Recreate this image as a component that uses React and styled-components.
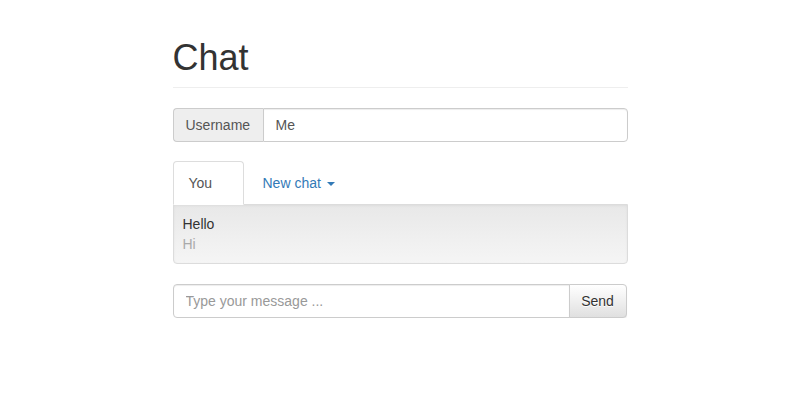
import React from 'react'
import styled, { createGlobalStyle } from 'styled-components'

const GlobalStyle = createGlobalStyle`
  body {
    margin: 0;
    background: #fff;
    font-family: "Liberation Sans", Arial, sans-serif;
    font-size: 14px;
    line-height: 20px;
    color: #333;
  }
  * { box-sizing: border-box; }
`

const Container = styled.div`
  width: 455px;
  margin: 0 auto;
`

const PageHeader = styled.div`
  margin: 38px 0 20px;
  padding-bottom: 9px;
  border-bottom: 1px solid #eee;
`

const Title = styled.h1`
  margin: 0;
  font-size: 36px;
  line-height: 39.6px;
  font-weight: 500;
  color: #333;
`

const InputGroup = styled.div`
  display: flex;
  height: 34px;
  margin-top: ${p => p.$top || 0}px;
`

const Addon = styled.span`
  display: flex;
  align-items: center;
  width: 90px;
  padding: 6px 12px;
  background: #eee;
  border: 1px solid #ccc;
  border-right: 0;
  border-radius: 4px 0 0 4px;
  color: #555;
`

const Input = styled.input`
  flex: 1;
  min-width: 0;
  height: 34px;
  padding: 6px 12px;
  font: inherit;
  color: #555;
  border: 1px solid #ccc;
  border-radius: ${p => (p.$side === 'left' ? '4px 0 0 4px' : '0 4px 4px 0')};
  box-shadow: inset 0 1px 1px rgba(0, 0, 0, 0.075);
  outline: none;
  &::placeholder { color: #999; }
`

const SendButton = styled.button`
  width: 58px;
  height: 34px;
  padding: 6px 0;
  margin-left: -1px;
  margin-right: 1px;
  font: inherit;
  color: #333;
  text-shadow: 0 1px 0 #fff;
  background-image: linear-gradient(to bottom, #fff 0, #e0e0e0 100%);
  border: 1px solid #ccc;
  border-radius: 0 4px 4px 0;
  box-shadow: inset 0 1px 0 rgba(255, 255, 255, 0.15), 0 1px 1px rgba(0, 0, 0, 0.075);
`

const Tabs = styled.ul`
  display: flex;
  list-style: none;
  margin: 19px 0 0;
  padding: 0;
`

const Tab = styled.li`
  margin-right: 2px;
  margin-bottom: -1px;
  padding: 11px 15px 11px ${p => (p.$active ? 15 : 16)}px;
  width: ${p => (p.$active ? '71px' : 'auto')};
  border: 1px solid ${p => (p.$active ? '#ddd' : 'transparent')};
  border-bottom-color: transparent;
  border-radius: 4px 4px 0 0;
  background: ${p => (p.$active ? '#fff' : 'transparent')};
  color: ${p => (p.$active ? '#555' : '#337ab7')};
  position: relative;
  z-index: ${p => (p.$active ? 1 : 0)};
`

const Caret = styled.span`
  display: inline-block;
  width: 0;
  height: 0;
  margin-left: 6px;
  vertical-align: middle;
  border-top: 4px solid;
  border-right: 4px solid transparent;
  border-left: 4px solid transparent;
`

const Well = styled.div`
  padding: 9px;
  background-image: linear-gradient(to bottom, #e8e8e8 0, #f5f5f5 100%);
  border: 1px solid #dcdcdc;
  border-radius: 0 0 4px 4px;
  box-shadow: inset 0 1px 3px rgba(0, 0, 0, 0.05), 0 1px 0 rgba(255, 255, 255, 0.1);
`

const Message = styled.div`
  color: ${p => (p.$muted ? '#aaa' : '#333')};
`

export default function App() {
  return (
    <Container>
      <GlobalStyle />
      <PageHeader>
        <Title>Chat</Title>
      </PageHeader>
      <InputGroup>
        <Addon>Username</Addon>
        <Input defaultValue="Me" />
      </InputGroup>
      <Tabs>
        <Tab $active>You</Tab>
        <Tab>New chat<Caret /></Tab>
      </Tabs>
      <Well>
        <Message>Hello</Message>
        <Message $muted>Hi</Message>
      </Well>
      <InputGroup $top={20}>
        <Input $side="left" placeholder="Type your message ..." />
        <SendButton>Send</SendButton>
      </InputGroup>
    </Container>
  )
}
